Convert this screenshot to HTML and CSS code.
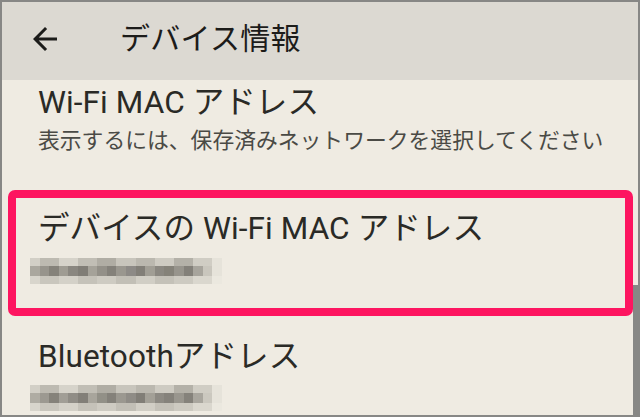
FILE: index.html
```html
<!DOCTYPE html>
<html lang="ja">
<head>
<meta charset="utf-8">
<title>デバイス情報</title>
<link rel="stylesheet" href="styles.css">
</head>
<body>
<div class="frame">
  <header class="appbar">
    <svg class="back" viewBox="0 0 24 24" width="36" height="36" aria-hidden="true">
      <path d="M20 11H7.83l5.59-5.59L12 4l-8 8 8 8 1.41-1.41L7.83 13H20v-2z" fill="#1c1c1a"/>
    </svg>
    <h1 class="title">デバイス情報</h1>
  </header>
  <div class="list">
    <div class="item first">
      <div class="item-title">Wi-Fi MAC アドレス</div>
      <div class="item-sub">表示するには、保存済みネットワークを選択してください</div>
    </div>
    <div class="item highlight">
      <div class="item-title">デバイスの Wi-Fi MAC アドレス</div>
      <div class="blur"><div class="blur-top"></div><div class="blur-mid"></div><div class="blur-bot"></div></div>
    </div>
    <div class="item last">
      <div class="item-title">Bluetoothアドレス</div>
      <div class="blur"><div class="blur-top"></div><div class="blur-mid alt"></div><div class="blur-bot"></div></div>
    </div>
  </div>
  <div class="scrollbar"></div>
</div>
</body>
</html>
```
FILE: styles.css
```css
* { box-sizing: border-box; }
html, body { margin: 0; padding: 0; }
body {
  width: 640px;
  height: 417px;
  overflow: hidden;
  font-family: Roboto, "Noto Sans CJK JP", sans-serif;
}
.frame {
  position: relative;
  width: 640px;
  height: 417px;
  border: 2px solid #878785;
  background: #efebe2;
  overflow: hidden;
}
.appbar {
  height: 78px;
  background: #dcd9d2;
  display: flex;
  align-items: center;
  padding-left: 25px;
  padding-bottom: 4px;
}
.back { display: block; flex: none; }
.title {
  margin: 0 0 0 57px;
  font-weight: 400;
  font-size: 30px;
  line-height: 36px;
  color: #1c1c1a;
  letter-spacing: 0.3px;
}
.list { display: flex; flex-direction: column; }
.item { padding-left: 36px; }
.item-title {
  font-size: 31.5px;
  line-height: 38px;
  color: #2a2a26;
  letter-spacing: 0.1px;
}
.item-sub {
  margin-top: 5px;
  font-size: 21.8px;
  line-height: 28px;
  color: #4a4a45;
}
.item.first { padding-top: 4px; height: 110px; }
.item.highlight {
  margin: 0 5px 0 6px;
  height: 126px;
  border: 8px solid #fd1560;
  border-radius: 7px;
  padding: 12px 0 0 22px;
}
.item.last { padding-top: 22px; }
.blur {
  margin: 10px 0 0 -8px;
  width: 160px;
  height: 26px;
  display: flex;
  flex-direction: column;
  filter: blur(0.6px);
  transform: scaleX(1.2);
  transform-origin: left center;
}
.item.last .blur { margin-top: 9px; }
.blur-top, .blur-bot { height: 8px; }
.blur-top {
  background: linear-gradient(90deg,
    #d2cfc6 0 8px, #bdbab1 8px 24px, #d6d3ca 24px 40px, #c1beb5 40px 56px,
    #b0ada4 56px 72px, #c8c5bc 72px 88px, #bbb8af 88px 104px, #cecbc2 104px 120px,
    #b4b1a8 120px 136px, #d0cdc4 136px 152px, #e6e3da 152px 160px);
}
.blur-mid {
  height: 10px;
  background: linear-gradient(90deg,
    #aaa79e 0 8px, #97948c 8px 16px, #85827a 16px 24px, #9f9c93 24px 32px,
    #8a8780 32px 40px, #807d76 40px 48px, #a5a299 48px 56px, #939088 56px 64px,
    #84817a 64px 72px, #9a978f 72px 80px, #8d8a86 80px 88px, #827f78 88px 96px,
    #a19e95 96px 104px, #8b8881 104px 112px, #858279 112px 120px, #97948c 120px 128px,
    #838079 128px 136px, #a7a49c 136px 144px, #c9c6bd 144px 152px, #e6e3da 152px 160px);
}
.blur-mid.alt {
  background: linear-gradient(90deg,
    #afaca3 0 8px, #9c9991 8px 16px, #85827a 16px 24px, #a19e96 24px 32px,
    #908d86 32px 40px, #827f78 40px 48px, #a8a59c 48px 56px, #929087 56px 64px,
    #84817a 64px 72px, #9b9890 72px 80px, #8f8c86 80px 88px, #817e77 88px 96px,
    #a3a097 96px 104px, #8d8a83 104px 112px, #85827b 112px 120px, #99968e 120px 128px,
    #85827b 128px 136px, #a9a69e 136px 144px, #cbc8bf 144px 152px, #e6e3da 152px 160px);
}
.blur-bot {
  background: linear-gradient(90deg,
    #d8d5cc 0 8px, #c9c6bd 8px 24px, #d4d1c8 24px 40px, #c5c2b9 40px 56px,
    #cecbc2 56px 72px, #c2bfb6 72px 88px, #d1cec5 88px 104px, #c4c1b8 104px 120px,
    #cdcac1 120px 136px, #dad7ce 136px 152px, #ebe8df 152px 160px);
}
.scrollbar {
  position: absolute;
  right: 0;
  top: 283px;
  width: 5px;
  bottom: 0;
  background: #878785;
}
```
